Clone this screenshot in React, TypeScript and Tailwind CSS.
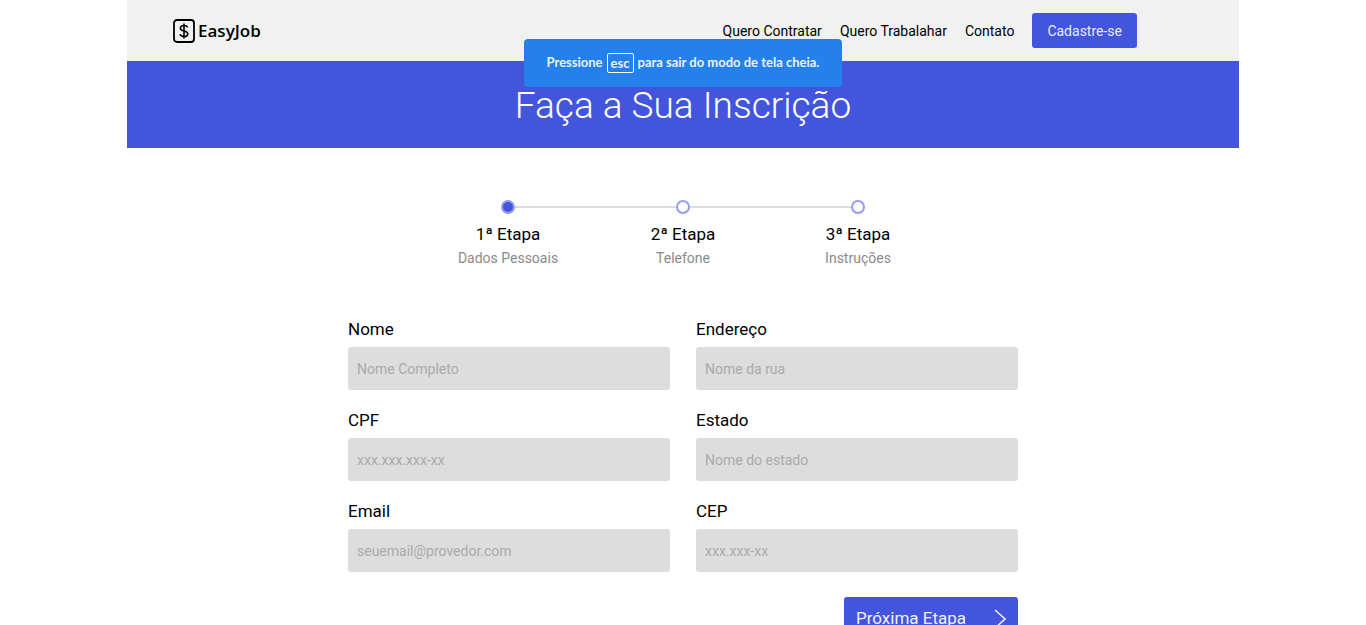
type Step = { title: string; subtitle: string; active?: boolean };
type Field = { id: string; label: string; placeholder: string; type?: string };

const links = ["Quero Contratar", "Quero Trabalahar", "Contato"];

const steps: Step[] = [
  { title: "1ª Etapa", subtitle: "Dados Pessoais", active: true },
  { title: "2ª Etapa", subtitle: "Telefone" },
  { title: "3ª Etapa", subtitle: "Instruções" },
];

const fields: Field[] = [
  { id: "nome", label: "Nome", placeholder: "Nome Completo" },
  { id: "endereco", label: "Endereço", placeholder: "Nome da rua" },
  { id: "cpf", label: "CPF", placeholder: "xxx.xxx.xxx-xx" },
  { id: "estado", label: "Estado", placeholder: "Nome do estado" },
  { id: "email", label: "Email", placeholder: "seuemail@provedor.com", type: "email" },
  { id: "cep", label: "CEP", placeholder: "xxx.xxx-xx" },
];

function Logo() {
  return (
    <a href="#" className="flex items-center gap-[3px] font-['Open_Sans',sans-serif] text-[17px] font-semibold text-black">
      <svg width="22" height="24" viewBox="0 0 22 24" fill="none" stroke="currentColor" aria-hidden="true">
        <rect x="1" y="1" width="20" height="22" rx="3" strokeWidth="1.8" />
        <path d="M14.6 8.3C14 7 12.7 6.5 11 6.5c-2.1 0-3.6 1-3.6 2.7 0 3.8 7.4 1.8 7.4 5.6 0 1.8-1.6 2.8-3.8 2.8-2 0-3.4-.8-4-2.3M11 4.6v14.8" strokeWidth="1.6" />
      </svg>
      EasyJob
    </a>
  );
}

function Header() {
  return (
    <header className="flex h-[61px] items-center justify-between bg-[#f1f1f1] pr-[102px] pl-[46px]">
      <Logo />
      <nav className="flex items-center gap-[18px] text-sm text-black">
        {links.map((link) => (
          <a key={link} href="#">
            {link}
          </a>
        ))}
        <button type="button" className="h-[35px] rounded-[3px] bg-[#4355dd] px-[15px] text-[#e9ebff]">
          Cadastre-se
        </button>
      </nav>
    </header>
  );
}

function Stepper() {
  return (
    <ol className="mx-auto grid w-full max-w-[525px] grid-cols-3">
      {steps.map((step, index) => (
        <li key={step.title} className="flex flex-col items-center">
          <div className="flex w-full items-center">
            <span className={index === 0 ? "h-0.5 flex-1" : "h-0.5 flex-1 bg-[#dddddd]"} />
            <span
              className={
                step.active
                  ? "size-[14px] rounded-full border-2 border-[#919cf5] bg-[#4355dd]"
                  : "size-[14px] rounded-full border-2 border-[#919cf5] bg-white"
              }
            />
            <span className={index === steps.length - 1 ? "h-0.5 flex-1" : "h-0.5 flex-1 bg-[#dddddd]"} />
          </div>
          <span className="mt-2 text-[17px] leading-6 text-black">{step.title}</span>
          <span className="text-sm leading-6 text-[#8a8a8a]">{step.subtitle}</span>
        </li>
      ))}
    </ol>
  );
}

export default function App() {
  return (
    <div className="min-h-screen bg-white font-[Roboto,sans-serif]">
      <div
        role="status"
        className="absolute top-[39px] left-1/2 flex h-12 w-[318px] -translate-x-1/2 items-center justify-center gap-1 rounded bg-[#2680eb] font-[Lato,sans-serif] text-[13px] font-bold whitespace-nowrap text-[#e8f2ff]"
      >
        Pressione
        <kbd className="rounded-[2px] border border-white px-[3px] font-[Lato,sans-serif] leading-[18px]">esc</kbd>
        para sair do modo de tela cheia.
      </div>
      <div className="mx-auto max-w-[1112px]">
        <Header />
        <div className="flex h-[87px] items-center justify-center bg-[#4355dd] pt-[3px]">
          <h1 className="text-[37px] font-light text-white">Faça a Sua Inscrição</h1>
        </div>
        <main className="pt-[52px] pb-12">
          <Stepper />
          <form className="mx-auto mt-[47px] w-full max-w-[670px]">
            <div className="grid grid-cols-2 gap-x-[26px] gap-y-[18px]">
              {fields.map((field) => (
                <div key={field.id} className="flex flex-col gap-1.5">
                  <label htmlFor={field.id} className="text-[17px] leading-6 text-black">
                    {field.label}
                  </label>
                  <input
                    id={field.id}
                    type={field.type ?? "text"}
                    placeholder={field.placeholder}
                    className="h-[43px] rounded-[3px] bg-[#dddddd] px-[9px] text-sm text-black placeholder:text-[#aaaaaa]"
                  />
                </div>
              ))}
            </div>
            <div className="mt-[25px] flex justify-end">
              <button type="submit" className="flex h-[43px] w-[174px] items-center justify-between rounded-[3px] bg-[#4355dd] px-3 text-[17px] text-[#f0f1ff]">
                Próxima Etapa
                <svg width="12" height="20" viewBox="0 0 12 20" fill="none" stroke="currentColor" strokeWidth="1.6" aria-hidden="true">
                  <path d="M1 1l10 9-10 9" />
                </svg>
              </button>
            </div>
          </form>
        </main>
      </div>
    </div>
  );
}
